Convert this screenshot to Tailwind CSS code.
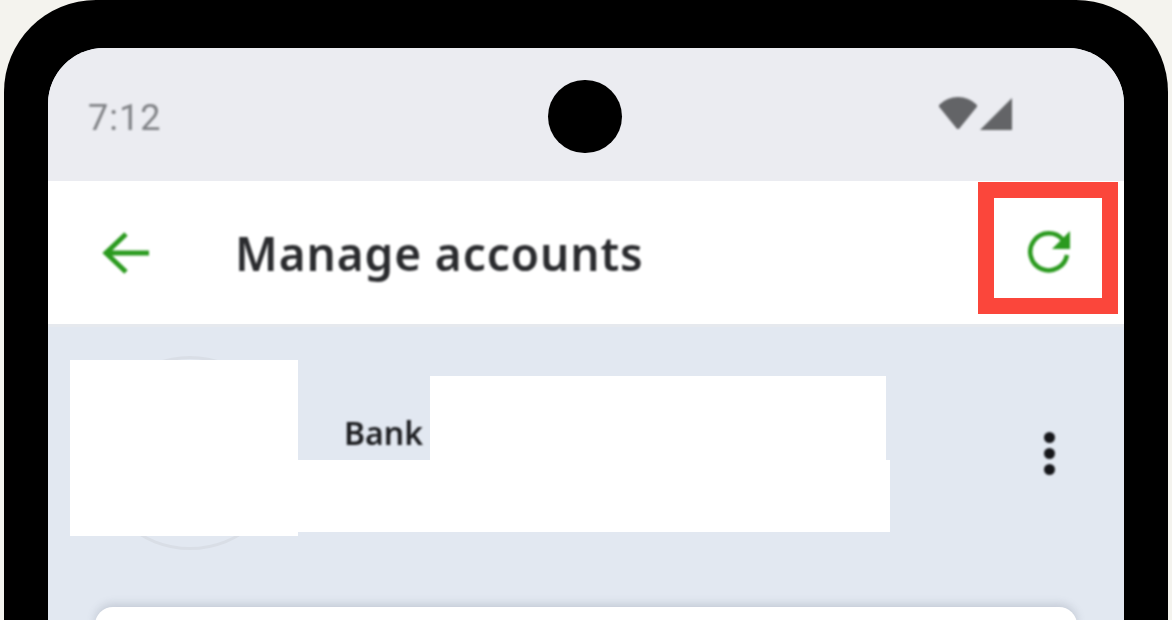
<!DOCTYPE html>
<html lang="en">

<head>
  <meta charset="UTF-8">
  <meta name="viewport" content="width=device-width, initial-scale=1.0">
  <title>Manage accounts</title>
  <script src="https://cdn.jsdelivr.net/npm/@tailwindcss/browser@4"></script>
</head>

<body class="bg-[#f4f3ee] overflow-hidden font-['Roboto',sans-serif]">
  <div class="relative w-[1172px] h-[620px] overflow-hidden">
    <!-- phone frame -->
    <div class="ml-[4px] w-[1164px] h-[760px] bg-black rounded-t-[92px] pt-[48px] px-[44px]">
      <div class="relative w-[1076px] h-[712px] rounded-t-[56px] overflow-hidden bg-[#e2e8f1]">

        <!-- status bar -->
        <div class="h-[133px] bg-[#ebecf1] flex items-start justify-between pl-[40px] pr-[111px]">
          <span class="mt-[49px] text-[36px] leading-[42px] tracking-[1px] text-[#808286] blur-[0.9px]">7:12</span>
          <div class="mt-[49px] flex items-end gap-[0px] blur-[0.9px]">
            <svg width="41" height="34" viewBox="0 0 41 34"><path d="M3 9C8 4 13 2 20 2s12 2 17 7L20 30Z" fill="#636467" stroke="#636467" stroke-width="4" stroke-linejoin="round" /></svg>
            <svg width="34" height="34" viewBox="0 0 34 34"><path d="M33 1v32H1Z" fill="#636467" /></svg>
          </div>
        </div>

        <!-- app bar -->
        <div class="h-[146px] bg-white border-b-[3px] border-[#e6e9ee] flex items-center">
          <svg class="ml-[54px] blur-[0.8px]" width="48" height="44" viewBox="0 0 48 44" fill="none" stroke="#2a9a1e" stroke-width="5">
            <path d="M47 22H5M24 3 4 22l20 19" />
          </svg>
          <h1 class="ml-[85px] text-[46px] leading-[52px] font-semibold text-[#2a2b2e] blur-[0.8px] font-['Noto_Sans',sans-serif] tracking-[0.9px]">Manage accounts</h1>
        </div>

        <!-- account row -->
        <div class="relative flex items-start h-[280px] pt-[29px]">
          <div class="ml-[45px] w-[194px] h-[194px] shrink-0 rounded-full border-[3px] border-[#d9dee6]"></div>
          <div class="ml-[57px] mt-[58px] text-[32px] leading-[38px] font-semibold text-[#1d1e21] blur-[0.8px] font-['Noto_Sans',sans-serif]">Bank</div>
          <div class="absolute left-[996px] top-[105px] flex flex-col gap-[5px] blur-[0.8px]">
            <span class="w-[11px] h-[11px] rounded-full bg-[#15161a]"></span>
            <span class="w-[11px] h-[11px] rounded-full bg-[#15161a]"></span>
            <span class="w-[11px] h-[11px] rounded-full bg-[#15161a]"></span>
          </div>
        </div>

        <!-- card -->
        <div class="mx-[47px] h-[200px] bg-white rounded-t-[18px] shadow-[0_-3px_8px_rgba(90,100,120,0.22)]"></div>
      </div>
    </div>

    <!-- camera -->
    <div class="absolute left-[548px] top-[80px] w-[74px] h-[73px] rounded-full bg-black"></div>

    <!-- highlight box -->
    <div class="absolute left-[978px] top-[182px] w-[140px] h-[132px] border-[16px] border-[#fb463b] flex items-center justify-center">
      <svg class="ml-[3px] mt-[5px] blur-[0.8px]" width="50" height="46" viewBox="0 0 50 46" fill="none">
        <path d="M38 12A18.500 18.500 0 1 0 42 27" stroke="#2a9a1e" stroke-width="4.500" />
        <path d="M45 3v18H27Z" fill="#2a9a1e" />
      </svg>
    </div>

    <!-- redaction blocks -->
    <div class="absolute left-[70px] top-[360px] w-[228px] h-[176px] bg-white"></div>
    <div class="absolute left-[430px] top-[376px] w-[456px] h-[84px] bg-white"></div>
    <div class="absolute left-[298px] top-[460px] w-[592px] h-[72px] bg-white"></div>
  </div>
</body>

</html>
